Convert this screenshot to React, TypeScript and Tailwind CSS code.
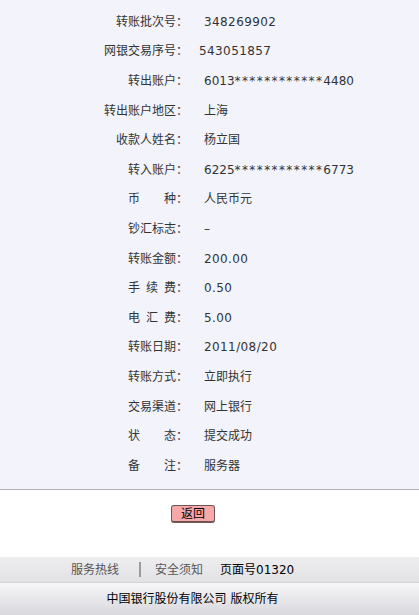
const rows: { label: string; value: string; shift?: boolean }[] = [
  { label: "转账批次号：", value: "348269902" },
  { label: "网银交易序号：", value: "543051857", shift: true },
  { label: "转出账户：", value: "6013************4480" },
  { label: "转出账户地区：", value: "上海" },
  { label: "收款人姓名：", value: "杨立国" },
  { label: "转入账户：", value: "6225************6773" },
  { label: "币\u3000\u3000种：", value: "人民币元" },
  { label: "钞汇标志：", value: "–" },
  { label: "转账金额：", value: "200.00" },
  { label: "手\u2002续\u2002费：", value: "0.50" },
  { label: "电\u2002汇\u2002费：", value: "5.00" },
  { label: "转账日期：", value: "2011/08/20" },
  { label: "转账方式：", value: "立即执行" },
  { label: "交易渠道：", value: "网上银行" },
  { label: "状\u3000\u3000态：", value: "提交成功" },
  { label: "备\u3000\u3000注：", value: "服务器" },
];

// masked card numbers get wider stars; plain numbers a touch of tracking
const Value = ({ text }: { text: string }) => {
  const m = text.match(/^(\d+)(\*+)(\d+)$/);
  if (m) {
    return (
      <>
        {m[1]}
        <span className="tracking-[1.4px]">{m[2]}</span>
        {m[3]}
      </>
    );
  }
  if (/^[\d./]+$/.test(text)) {
    return <span className="tracking-[0.4px]">{text}</span>;
  }
  return <>{text}</>;
};

const App = () => {
  return (
    <div
      className="w-[419px] h-[615px] flex flex-col text-[12px] text-[#333333] bg-white"
      style={{ fontFamily: '"DejaVu Sans", "Noto Sans CJK SC", sans-serif' }}
    >
      <div className="h-[490px] bg-[#f2f3fb] border-b border-[#b4b4b4] pt-[7px]">
        {rows.map((r) => (
          <div key={r.label} className="h-[29.6px] flex items-center">
            <div className="w-[188px] text-right whitespace-pre">{r.label}</div>
            <div className={r.shift ? "pl-[11px]" : "pl-[16px]"}>
              <Value text={r.value} />
            </div>
          </div>
        ))}
      </div>

      <div className="h-[67px] flex items-start pt-[15px] pl-[171px]">
        <button className="w-[44px] h-[18px] flex items-center justify-center bg-[#f8a8a8] border border-[#6e5656] border-b-2 rounded-[3px] text-[12px] text-black leading-none">
          返回
        </button>
      </div>

      <div className="h-[26px] flex items-center pl-[71px] bg-gradient-to-b from-[#eeeef0] to-[#e2e2e5] border-b border-[#d4d4d8]">
        <span className="text-[#555555]">服务热线</span>
        <span className="ml-[20px] mr-[14px] w-[2px] h-[15px] bg-[#9a9a9a]"></span>
        <span className="text-[#555555]">安全须知</span>
        <span className="ml-[17px] text-black">页面号01320</span>
      </div>

      <div className="flex-1 flex items-center justify-center pr-[34px] bg-gradient-to-b from-[#f7f7f9] to-[#d8d8dd] text-black">
        中国银行股份有限公司 版权所有
      </div>
    </div>
  );
};

export default App;
